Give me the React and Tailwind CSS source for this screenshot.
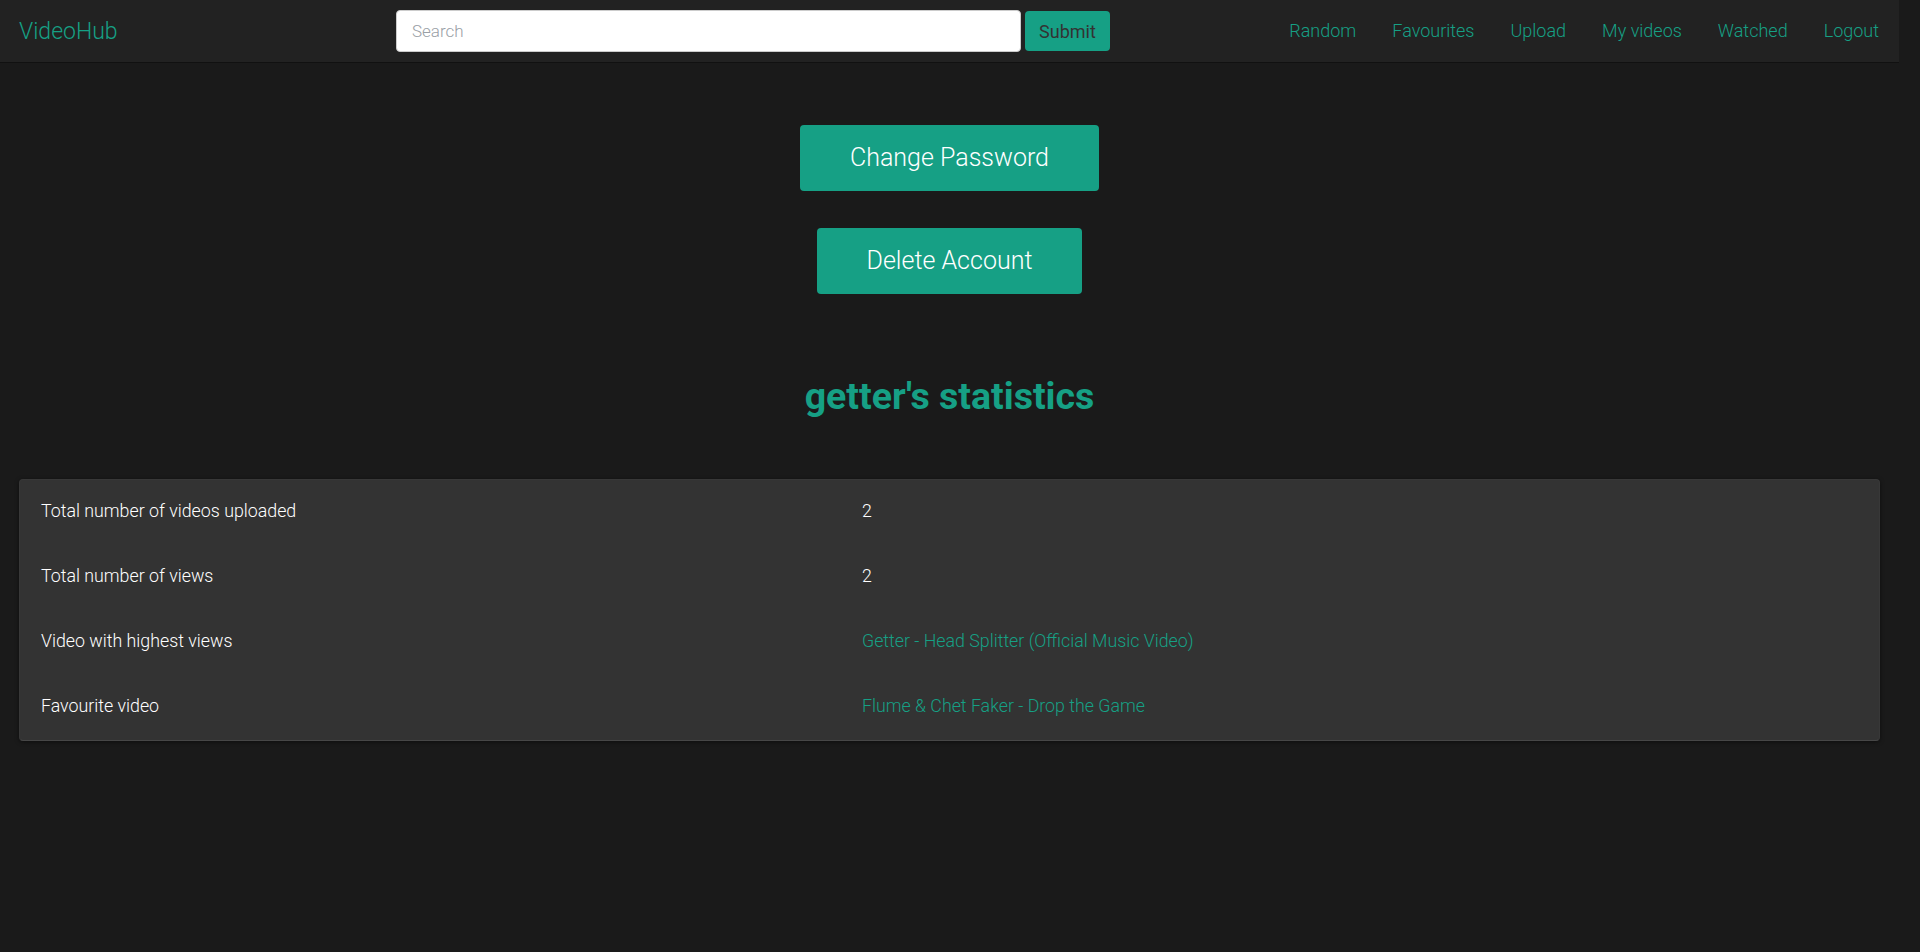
import React from "react";

const links = ["Random", "Favourites", "Upload", "My videos", "Watched", "Logout"];

const stats = [
  { label: "Total number of videos uploaded", value: "2" },
  { label: "Total number of views", value: "2" },
  { label: "Video with highest views", value: "Getter - Head Splitter (Official Music Video)", link: true },
  { label: "Favourite video", value: "Flume & Chet Faker - Drop the Game", link: true },
];

const App = () => {
  return (
    <div className="min-h-screen bg-[#1a1a1a] font-['Roboto',sans-serif] font-light">
      <div className="w-[1899px]">
        {/* NAVBAR */}
        <nav className="h-[63px] bg-[#222222] border-b border-[#111111] flex items-center pl-[19px] pr-[20px]">
          <a href="#" className="w-[377px] text-[23px] text-[#16a085] leading-none">
            VideoHub
          </a>

          <form className="flex items-center" onSubmit={(e) => e.preventDefault()}>
            <input
              type="text"
              placeholder="Search"
              className="w-[625px] h-[42px] bg-white rounded-[4px] border border-[#cccccc] px-[15px] text-[17px] text-[#333] placeholder:text-[#9aa0a6] outline-none"
            />
            <button className="ml-[4px] w-[85px] h-[40px] rounded-[4px] bg-[#16a085] text-[18px] font-normal text-[#333333]">
              Submit
            </button>
          </form>

          <ul className="ml-auto flex items-center gap-[36px] pb-[1px]">
            {links.map((l) => (
              <li key={l}>
                <a href="#" className="text-[18px] text-[#16a085]">
                  {l}
                </a>
              </li>
            ))}
          </ul>
        </nav>

        {/* ACCOUNT ACTIONS */}
        <main className="flex flex-col items-center pt-[62px]">
          <button className="h-[66px] px-[50px] rounded-[4px] bg-[#16a085] text-[25px] text-white">
            Change Password
          </button>
          <button className="mt-[37px] h-[66px] px-[50px] rounded-[4px] bg-[#16a085] text-[25px] text-white">
            Delete Account
          </button>

          <h2 className="mt-[80px] text-[37.5px] leading-[45px] font-bold text-[#16a085]">
            getter's statistics
          </h2>
        </main>

        {/* STATS TABLE */}
        <div className="mx-[19px] mt-[60px] bg-[#333333] rounded-[4px] border border-[#383838] border-b-[#474747] shadow-[0_1px_4px_rgba(0,0,0,0.5)]">
          {stats.map((s) => (
            <div key={s.label} className="grid grid-cols-[821px_1fr] h-[65px] items-center px-[21px] pb-[2px] text-[17.8px]">
              <span className="text-white">{s.label}</span>
              {s.link ? (
                <a href="#" className="text-[#16a085]">
                  {s.value}
                </a>
              ) : (
                <span className="text-white">{s.value}</span>
              )}
            </div>
          ))}
        </div>
      </div>
    </div>
  );
};

export default App;
